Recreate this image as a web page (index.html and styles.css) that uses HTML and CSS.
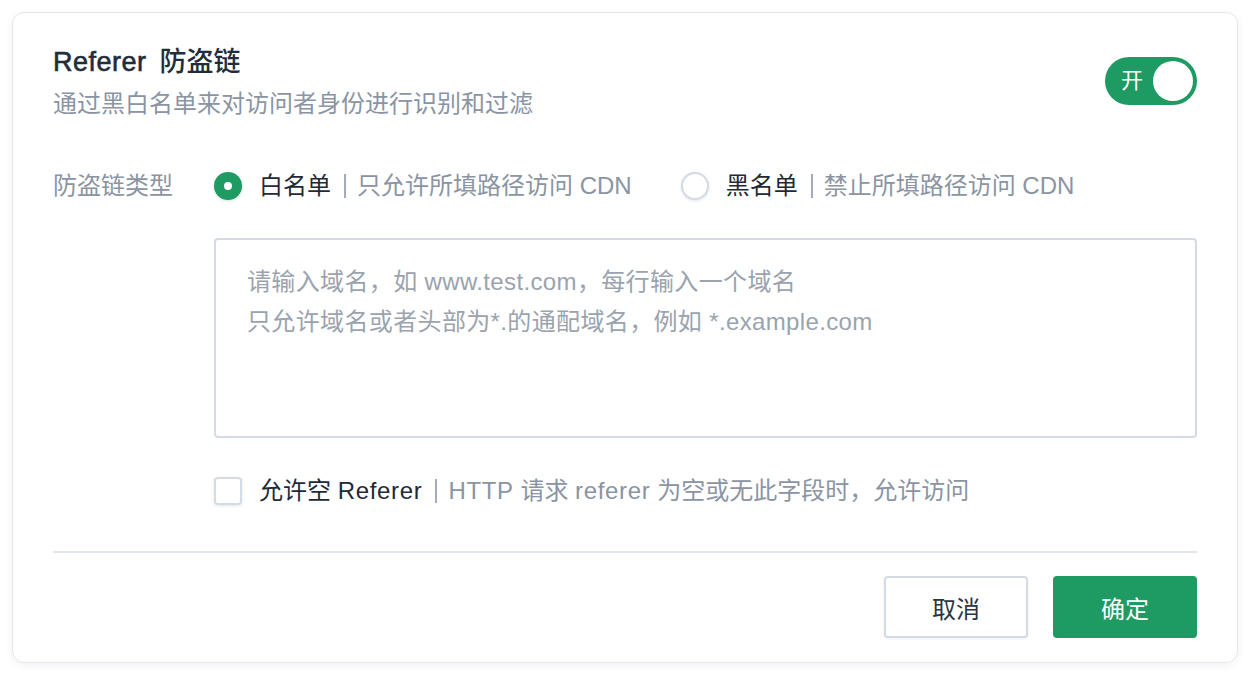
FILE: index.html
```html
<!DOCTYPE html>
<html lang="zh-CN">
<head>
<meta charset="utf-8">
<title>Referer 防盗链</title>
<link rel="stylesheet" href="styles.css">
</head>
<body>
<div class="page">
  <div class="card">
    <div class="header">
      <div class="heading">
        <h1 class="title"><span class="title-en">Referer</span><span class="title-cn">防盗链</span></h1>
        <p class="subtitle">通过黑白名单来对访问者身份进行识别和过滤</p>
      </div>
      <div class="toggle">
        <span class="toggle-text">开</span>
        <span class="toggle-knob"></span>
      </div>
    </div>

    <div class="form-row">
      <div class="label">防盗链类型</div>
      <div class="radios">
        <label class="radio-item">
          <span class="radio radio-on"></span>
          <span class="opt-main">白名单</span><span class="bar"></span><span class="opt-desc">只允许所填路径访问 CDN</span>
        </label>
        <label class="radio-item">
          <span class="radio"></span>
          <span class="opt-main">黑名单</span><span class="bar"></span><span class="opt-desc">禁止所填路径访问 CDN</span>
        </label>
      </div>
    </div>

    <div class="field">
      <textarea class="domains" placeholder="请输入域名，如 www.test.com，每行输入一个域名&#10;只允许域名或者头部为*.的通配域名，例如 *.example.com"></textarea>
    </div>

    <div class="field check-row">
      <span class="checkbox"></span>
      <span class="opt-main">允许空 <span class="lat">Referer</span></span><span class="bar"></span><span class="opt-desc"><span class="lat">HTTP</span> 请求 <span class="lat">referer</span> 为空或无此字段时，允许访问</span>
    </div>

    <div class="divider"></div>

    <div class="actions">
      <button class="btn btn-cancel">取消</button>
      <button class="btn btn-ok">确定</button>
    </div>
  </div>
</div>
</body>
</html>
```

FILE: styles.css
```css
* { box-sizing: border-box; }

html, body {
  margin: 0;
  padding: 0;
  background: #ffffff;
}

body {
  font-family: "Liberation Sans", "Noto Sans CJK SC", sans-serif;
  color: #1f2a37;
}

.page {
  padding: 12px 18px 15px 12px;
}

.card {
  width: 1226px;
  height: 651px;
  background: #fff;
  border: 1px solid #e4e7ec;
  border-radius: 12px;
  box-shadow: 0 2px 10px rgba(20, 30, 60, 0.06);
  padding: 31px 40px 24px 40px;
  display: flex;
  flex-direction: column;
}

.header {
  display: flex;
  justify-content: space-between;
  align-items: flex-start;
}

.title {
  margin: 0;
  font-size: 27px;
  line-height: 36px;
  font-weight: 400;
  color: #222c3a;
}

.title-en {
  letter-spacing: 0.5px;
  -webkit-text-stroke: 0.6px #222c3a;
}

.title-cn {
  margin-left: 13px;
  font-weight: 500;
}

.subtitle {
  margin: 6px 0 0;
  font-size: 24px;
  line-height: 36px;
  color: #8a94a3;
}

.toggle {
  margin-top: 13px;
  width: 92px;
  height: 48px;
  border-radius: 24px;
  background: #1e9a63;
  display: flex;
  align-items: center;
  justify-content: space-between;
  padding: 0 4px 0 16px;
}

.toggle-text {
  color: #fff;
  font-size: 22px;
  line-height: 24px;
}

.toggle-knob {
  width: 40px;
  height: 40px;
  border-radius: 50%;
  background: #fff;
}

.form-row {
  margin-top: 44px;
  display: flex;
  align-items: center;
  height: 40px;
}

.label {
  width: 161px;
  font-size: 24px;
  line-height: 40px;
  color: #8a94a3;
}

.radios {
  display: flex;
  gap: 49px;
}

.radio-item {
  display: flex;
  align-items: center;
  font-size: 24px;
  line-height: 40px;
}

.radio {
  width: 28px;
  height: 28px;
  border-radius: 50%;
  border: 2px solid #d3dbe4;
  background: #fff;
  box-shadow: 0 1px 3px rgba(30, 50, 80, 0.12);
  margin-right: 17px;
}

.radio-on {
  border: 10px solid #1e9a63;
  box-shadow: 0 1px 3px rgba(30, 120, 80, 0.2);
}

.opt-main {
  color: #1f2a37;
}

.bar {
  display: inline-block;
  width: 2px;
  height: 24px;
  background: #a3acb8;
  margin: 0 11px 0 13px;
}

.opt-desc {
  color: #8a94a3;
}

.lat {
  letter-spacing: 0.67px;
}

.field {
  margin-left: 161px;
}

.domains {
  display: block;
  margin-top: 32px;
  width: 983px;
  height: 200px;
  border: 2px solid #d3dbe4;
  border-radius: 4px;
  padding: 22px 31px;
  font-family: "Liberation Sans", "Noto Sans CJK SC", sans-serif;
  font-size: 24px;
  line-height: 40px;
  color: #1f2a37;
  resize: none;
  outline: none;
}

.domains::placeholder {
  color: #9aa3ae;
  letter-spacing: 0.36px;
}

.check-row {
  margin-top: 33px;
  display: flex;
  align-items: center;
  height: 40px;
  font-size: 24px;
  line-height: 40px;
}

.checkbox {
  width: 28px;
  height: 28px;
  border: 2px solid #d3dbe4;
  border-radius: 4px;
  background: #fff;
  box-shadow: 0 1px 3px rgba(30, 50, 80, 0.12);
  margin-right: 17px;
}

.divider {
  margin-top: 40px;
  height: 2px;
  background: #e0e6ed;
}

.actions {
  margin-top: 23px;
  display: flex;
  justify-content: flex-end;
  gap: 25px;
}

.btn {
  width: 144px;
  height: 62px;
  border-radius: 4px;
  font-family: "Liberation Sans", "Noto Sans CJK SC", sans-serif;
  font-size: 24px;
  cursor: pointer;
}

.btn-cancel {
  background: #fff;
  border: 2px solid #d3dbe4;
  color: #2a3443;
  box-shadow: 0 1px 3px rgba(30, 50, 80, 0.08);
}

.btn-ok {
  background: #1e9a63;
  border: none;
  color: #fff;
}
```
